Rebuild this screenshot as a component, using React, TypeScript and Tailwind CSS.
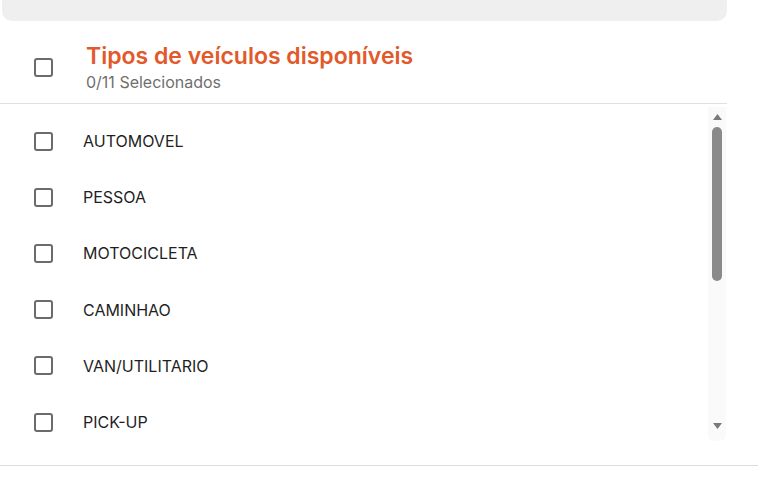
import React from "react";

const vehicleTypes = [
  "AUTOMOVEL",
  "PESSOA",
  "MOTOCICLETA",
  "CAMINHAO",
  "VAN/UTILITARIO",
  "PICK-UP",
  "ONIBUS",
  "BICICLETA",
  "REBOQUE",
  "TRATOR",
  "OUTROS"
];

function Box() {
  return <div className="w-[19px] h-[19px] border-2 border-[#6b6b6b] rounded-[3px] shrink-0" />;
}

export default function App() {
  return (
    <div className="w-[758px] h-[480px] bg-white overflow-hidden font-['Inter',sans-serif]">
      <div className="w-[727px]">
        <div className="ml-[2px] h-[21px] bg-[#efefef] rounded-b-[10px]" />

        {/* Header */}
        <div className="flex items-start h-[83px] border-b border-[#e0e0e0]">
          <div className="w-[86px] pl-[34px] pt-[37px]">
            <Box />
          </div>
          <div className="flex flex-col pt-[20px]">
            <span className="text-[23px] leading-[30px] font-semibold text-[#e2592a]">Tipos de veículos disponíveis</span>
            <span className="text-[16px] leading-[22px] text-[#6f6f6f]">0/11 Selecionados</span>
          </div>
        </div>

        {/* List */}
        <div className="flex h-[337px]">
          <div className="flex-1 overflow-hidden pt-[9px]">
            {vehicleTypes.map((v) => (
              <div key={v} className="flex items-center h-[56.2px]">
                <div className="w-[83px] pl-[34px]">
                  <Box />
                </div>
                <span className="text-[16px] text-[#1f1f1f]">{v}</span>
              </div>
            ))}
          </div>
          <div className="w-[18px] mr-[1px] mt-[3px] bg-[#fafafa] rounded-b-[6px] flex flex-col items-center">
            <div className="h-[20px] flex items-center justify-center">
              <svg width="9" height="6" viewBox="0 0 9 6"><path d="M4.5 0L9 6H0z" fill="#7a7a7a" /></svg>
            </div>
            <div className="w-[10px] h-[154px] bg-[#8a8a8a] rounded-full" />
            <div className="flex-1" />
            <div className="h-[22px] flex items-start justify-center pt-[4px]">
              <svg width="9" height="6" viewBox="0 0 9 6"><path d="M0 0H9L4.5 6z" fill="#7a7a7a" /></svg>
            </div>
          </div>
        </div>
      </div>
      <div className="mt-[24px] border-t border-[#dcdcdc]" />
    </div>
  );
}
